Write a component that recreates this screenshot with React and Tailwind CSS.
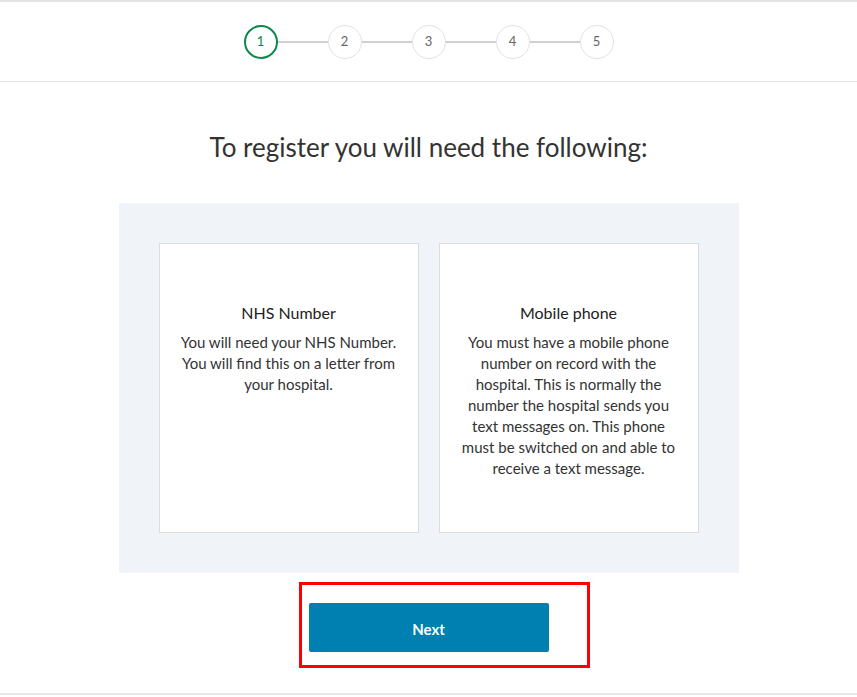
const steps = [1, 2, 3, 4, 5];

const cards = [
  {
    title: 'NHS Number',
    body: 'You will need your NHS Number. You will find this on a letter from your hospital.',
  },
  {
    title: 'Mobile phone',
    body: 'You must have a mobile phone number on record with the hospital. This is normally the number the hospital sends you text messages on. This phone must be switched on and able to receive a text message.',
  },
];

const Stepper = () => (
  <div className="flex items-center justify-center h-[82px] pt-[1px] border-t-2 border-b border-[#e3e3e3]">
    {steps.map((n, i) => (
      <div key={n} className="flex items-center">
        {i > 0 && <div className="w-[50px] h-[2px] bg-[#d0d0d0]" />}
        <div
          className={
            n === 1
              ? 'w-[34px] h-[34px] rounded-full border-2 border-[#0a8a4a] flex items-center justify-center text-[13px] text-[#0a8a4a]'
              : 'w-[34px] h-[34px] rounded-full border border-[#e2e2e2] flex items-center justify-center text-[13px] text-[#666]'
          }
        >
          {n}
        </div>
      </div>
    ))}
  </div>
);

export default function App() {
  return (
    <div className="w-[857px] h-[697px] bg-white font-['Lato','Noto_Sans',sans-serif] text-[#333]">
      <Stepper />
      <h1 className="text-center text-[26px] mt-[49px] leading-[32px]">
        To register you will need the following:
      </h1>
      <div className="mx-auto mt-[40px] w-[620px] h-[370px] bg-[#f0f3f7] p-[40px] flex gap-[20px]">
        {cards.map(c => (
          <div key={c.title} className="flex-1 bg-white border border-[#dcdcdc] px-[20px] pt-[58px] text-center">
            <h2 className="text-[16px] leading-[22px] font-normal text-[#222] mb-[8px]">{c.title}</h2>
            <p className="text-[15px] leading-[21px]">{c.body}</p>
          </div>
        ))}
      </div>
      <div className="flex justify-center mt-[9px] ml-[31px]">
        <div className="border-[3px] border-[#f00] w-[291px] h-[86px] pl-[7px] pt-[18px]">
          <button className="w-[240px] h-[49px] pt-[3px] bg-[#0080b0] rounded-[2px] text-white text-[15px] font-bold">
            Next
          </button>
        </div>
      </div>
      <div className="mt-[25px] h-[2px] bg-[#e8e8e8]" />
    </div>
  );
}
